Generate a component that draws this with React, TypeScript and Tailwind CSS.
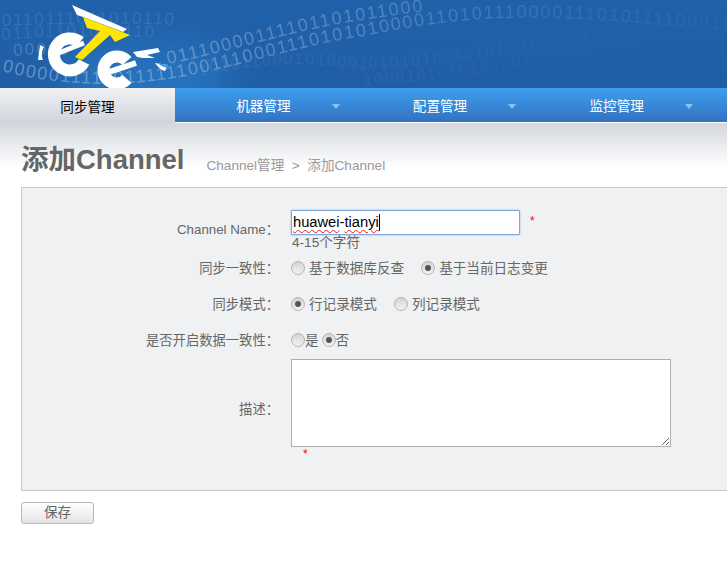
import React from "react";

const FONT = '"Liberation Sans","Noto Sans CJK SC",sans-serif';

const rows: { d: string; t: string; o: number; s: number }[] = [
  { d: "M2,26 C60,24 120,22 190,26", t: "0110111011010110", o: 0.1, s: 17 },
  { d: "M2,40 C50,36 120,34 185,40", t: "01101101010110", o: 0.09, s: 17 },
  { d: "M14,56 C30,54 50,54 80,56", t: "00010", o: 0.18, s: 17 },
  { d: "M2,71 C50,84 110,88 167,79 C230,70 300,45 363,36 C420,25 470,18 510,18 C580,16 650,25 727,30", t: "000001111101111110011100011101010100001101011100001110101111000111011", o: 0.3, s: 18 },
  { d: "M168,64 C230,52 300,28 364,20 C400,14 430,10 475,8", t: "01110000111101101011000", o: 0.3, s: 18 },
  { d: "M200,76 C260,62 310,62 364,69 C430,66 500,55 560,44 C620,34 680,30 727,36", t: "1010110001010001010101001010100100101001", o: 0.07, s: 16 },
  { d: "M364,86 C430,80 500,72 564,58 C620,48 680,46 727,50", t: "10001010101010010100101001", o: 0.06, s: 16 },
];

function Binary() {
  return (
    <svg className="absolute inset-0" width="727" height="88" viewBox="0 0 727 88" aria-hidden="true">
      <defs>
        <linearGradient id="fade" gradientUnits="userSpaceOnUse" x1="0" y1="0" x2="727" y2="0">
          <stop offset="0" stopColor="#fff" stopOpacity="1" />
          <stop offset="0.5" stopColor="#fff" stopOpacity="0.75" />
          <stop offset="0.75" stopColor="#fff" stopOpacity="0.3" />
          <stop offset="1" stopColor="#fff" stopOpacity="0.1" />
        </linearGradient>
        {rows.map((r, i) => (
          <path key={i} id={`row${i}`} d={r.d} fill="none" />
        ))}
      </defs>
      {rows.map((r, i) => (
        <text key={i} fill="url(#fade)" opacity={r.o} fontSize={r.s} fontFamily="Liberation Sans" letterSpacing="1.8">
          <textPath href={`#row${i}`}>{r.t}</textPath>
        </text>
      ))}
    </svg>
  );
}

function Logo() {
  return (
    <svg className="absolute left-[30px] top-0" width="150" height="90" viewBox="0 0 150 90" aria-hidden="true">
      <path d="M42 5 L97 29 L93 32 L56 18 L47 15 Z" fill="#ffffff" />
      <path d="M10 45 L8 60 L13 60 C11 55 12 50 14 47 Z" fill="#ffffff" />
      {/* first e */}
      <path d="M50 42 A16 16 0 1 0 54 62" fill="none" stroke="#ffffff" strokeWidth="12" />
      <path d="M26 54 L54 43" fill="none" stroke="#ffffff" strokeWidth="5" />
      {/* second e */}
      <path d="M97 61 A13.5 13.5 0 1 0 97 79" fill="none" stroke="#ffffff" strokeWidth="12" />
      <path d="M76 73 L106 63" fill="none" stroke="#ffffff" strokeWidth="6" />
      {/* T */}
      <path d="M53 17 L100 35 L85 42 L80 35 L52 60 L45 57 L70 31 L57 28 Z" fill="#ffe600" />
      {/* wing */}
      <path d="M103 52 L128 48 L130 52 L117 55 L125 58 L113 58 L107 57 Z" fill="#ffffff" />
      <path d="M125 63 L138 65 L135 71 C131 70 128 67 125 63 Z" fill="#ffffff" />
      <path d="M127 63 L138 65 L137 68 C133 67 130 65 127 63 Z" fill="#3f9bdc" />
    </svg>
  );
}

function Arrow() {
  return <span className="absolute right-[12px] top-[16px] h-0 w-0 border-x-[4px] border-t-[5px] border-x-transparent border-t-[#8fc0ee]" />;
}

function Tab({ label }: { label: string }) {
  return (
    <div className="relative flex h-full w-[176.7px] shrink-0 items-center justify-center pt-[5px] text-[13.6px] text-white">
      <span>{label}</span>
      <Arrow />
    </div>
  );
}

function Radio({ checked }: { checked?: boolean }) {
  return (
    <span className="flex h-[14px] w-[14px] shrink-0 items-center justify-center rounded-full border border-[#b4b4b4] bg-gradient-to-b from-[#d4d4d4] to-[#f2f2f2]">
      {checked ? <span className="h-[6px] w-[6px] rounded-full bg-[#555555]" /> : null}
    </span>
  );
}

function Label({ children, className }: { children: React.ReactNode; className: string }) {
  return <div className={`w-[257px] shrink-0 text-right text-[13.3px] ${className}`}>{children}</div>;
}

export default function App() {
  return (
    <div className="h-[563px] w-[727px] overflow-hidden bg-white text-[13.6px] text-[#666666]" style={{ fontFamily: FONT }}>
      <header className="relative h-[88px] overflow-hidden bg-gradient-to-b from-[#1f62aa] to-[#1f5ea6]">
        <div className="absolute left-[60px] top-[50px] h-[60px] w-[170px] rounded-full bg-[#2f86d0] opacity-60 blur-[22px]" />
        <Binary />
        <Logo />
      </header>

      <nav className="flex h-[35px] border-b border-white bg-gradient-to-b from-[#3d9ff0] to-[#3372bf]">
        <div className="-mb-px flex h-[35px] w-[175px] shrink-0 items-center justify-center bg-gradient-to-b from-[#f1f2f4] to-[#cfd3dc] pt-[5px] text-[13.6px] text-black">
          同步管理
        </div>
        <Tab label="机器管理" />
        <Tab label="配置管理" />
        <Tab label="监控管理" />
      </nav>

      <div className="bg-gradient-to-b from-[#d3d6db] to-white to-[44px] pl-[21px] pt-[20px]">
        <div className="mb-[10px] flex h-[34px] items-center">
          <h1 className="text-[27.5px] font-bold leading-none text-[#666666]">添加Channel</h1>
          <div className="ml-[22px] mt-[12px] text-[13.6px] text-[#999999]">Channel管理 &nbsp;&gt;&nbsp; 添加Channel</div>
        </div>

        <form className="h-[304px] border border-r-0 border-[#c8c8c8] bg-[#f0f1f3] pt-[22px]">
          <div className="flex">
            <Label className="pt-[10px]">Channel Name：</Label>
            <div className="ml-[12px]">
              <div className="flex items-center">
                <div className="flex h-[25px] w-[229px] items-center rounded-[1px] border border-[#7ea6dc] bg-white pl-[1px] text-[14.7px] text-black shadow-[0_0_2px_#8db4e8]">
                  <span className="underline decoration-[#e82020] decoration-wavy decoration-1 underline-offset-2">huawei</span>
                  <span>-</span>
                  <span className="underline decoration-[#e82020] decoration-wavy decoration-1 underline-offset-2">tianyi</span>
                  <span className="h-[17px] w-px bg-black" />
                </div>
                <span className="mb-[3px] ml-[10px] text-[12px] text-[#ff0000]">*</span>
              </div>
              <div className="h-[15px] pl-[1px] leading-[15px]">4-15个字符</div>
            </div>
          </div>

          <div className="mt-[9px] flex h-[18px] items-center">
            <Label className="pt-[2px]">同步一致性：</Label>
            <div className="ml-[12px] flex items-center">
              <Radio />
              <span className="ml-[4px] pt-[3px]">基于数据库反查</span>
              <span className="ml-[17px]"><Radio checked /></span>
              <span className="ml-[4px] pt-[3px]">基于当前日志变更</span>
            </div>
          </div>

          <div className="mt-[18px] flex h-[18px] items-center">
            <Label className="pt-[2px]">同步模式：</Label>
            <div className="ml-[12px] flex items-center">
              <Radio checked />
              <span className="ml-[4px] pt-[3px]">行记录模式</span>
              <span className="ml-[17px]"><Radio /></span>
              <span className="ml-[4px] pt-[3px]">列记录模式</span>
            </div>
          </div>

          <div className="mt-[18px] flex h-[18px] items-center">
            <Label className="pt-[2px]">是否开启数据一致性：</Label>
            <div className="ml-[12px] flex items-center">
              <Radio />
              <span className="pt-[3px]">是</span>
              <span className="ml-[3px]"><Radio checked /></span>
              <span className="pt-[3px]">否</span>
            </div>
          </div>

          <div className="mt-[10px] flex items-center">
            <Label className="pt-[14px]">描述：</Label>
            <textarea className="ml-[12px] block h-[88px] w-[380px] border border-[#aeaeae] bg-white" />
          </div>
          <div className="ml-[281px] h-[10px] text-[12px] leading-[14px] text-[#ff0000]">*</div>
        </form>

        <button className="mt-[11px] h-[22px] w-[73px] rounded-[3px] border border-[#b8b8b8] bg-gradient-to-b from-white to-[#e4e4e4] text-[13.6px] text-[#666666]">
          保存
        </button>
      </div>
    </div>
  );
}
